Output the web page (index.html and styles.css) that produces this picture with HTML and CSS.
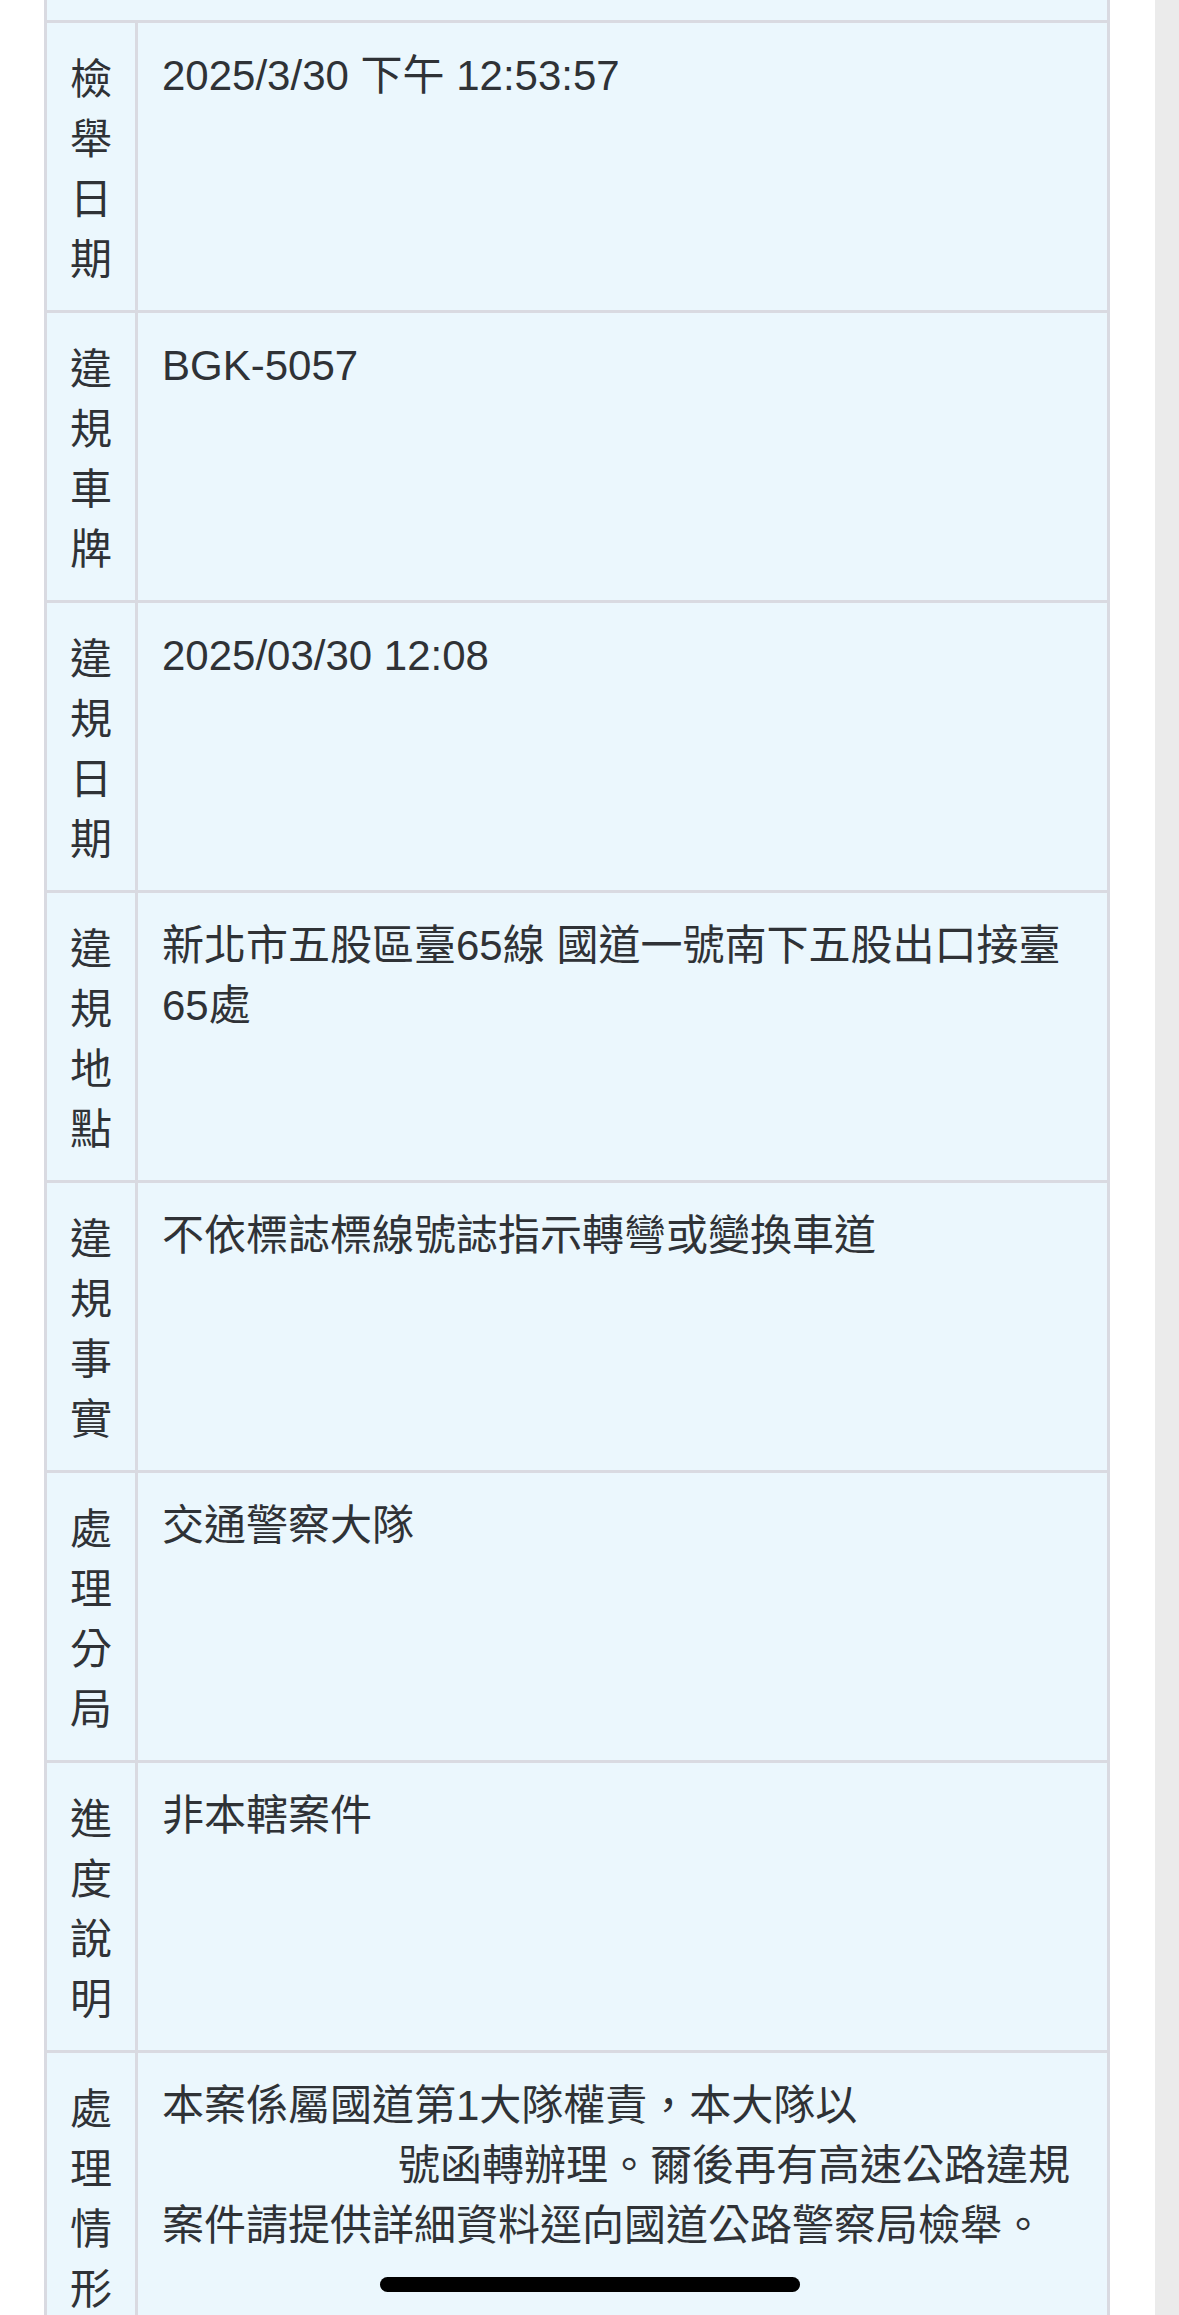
FILE: index.html
```html
<!DOCTYPE html>
<html lang="zh-Hant">
<head>
<meta charset="utf-8">
<link rel="stylesheet" href="styles.css">
</head>
<body>
<div class="page">
  <main class="main">
    <div class="table">
      <div class="stub"><div class="stub-label"></div><div class="stub-value"></div></div>
      <div class="row">
        <div class="label">檢<br>舉<br>日<br>期</div>
        <div class="value">2025/3/30 下午 12:53:57</div>
      </div>
      <div class="row">
        <div class="label">違<br>規<br>車<br>牌</div>
        <div class="value">BGK-5057</div>
      </div>
      <div class="row">
        <div class="label">違<br>規<br>日<br>期</div>
        <div class="value">2025/03/30 12:08</div>
      </div>
      <div class="row">
        <div class="label">違<br>規<br>地<br>點</div>
        <div class="value">新北市五股區臺65線 國道一號南下五股出口接臺<br>65處</div>
      </div>
      <div class="row">
        <div class="label">違<br>規<br>事<br>實</div>
        <div class="value">不依標誌標線號誌指示轉彎或變換車道</div>
      </div>
      <div class="row">
        <div class="label">處<br>理<br>分<br>局</div>
        <div class="value">交通警察大隊</div>
      </div>
      <div class="row">
        <div class="label">進<br>度<br>說<br>明</div>
        <div class="value">非本轄案件</div>
      </div>
      <div class="row">
        <div class="label">處<br>理<br>情<br>形</div>
        <div class="value">本案係屬國道第1大隊權責，本大隊以<br><span class="gap"></span>號函轉辦理。爾後再有高速公路違規<br>案件請提供詳細資料逕向國道公路警察局檢舉。</div>
      </div>
    </div>
  </main>
  <aside class="strip"></aside>
</div>
<div class="home-bar"></div>
</body>
</html>
```

FILE: styles.css
```css
html, body {
  margin: 0;
  padding: 0;
  background: #ffffff;
}

body {
  width: 1179px;
  height: 2315px;
  overflow: hidden;
  font-family: "Liberation Sans", "Noto Sans CJK TC", sans-serif;
  font-size: 42px;
  line-height: 60px;
  color: #2f3236;
}

.page {
  display: flex;
  height: 2315px;
}

.main {
  width: 1155px;
  padding-left: 44px;
  box-sizing: border-box;
}

.strip {
  width: 24px;
  background: #ebebeb;
}

.table {
  width: 1066px;
  border-left: 3px solid #d9dae1;
  border-right: 3px solid #d9dae1;
  box-sizing: border-box;
  background: #ebf7fd;
}

.stub {
  display: flex;
  height: 20px;
}

.stub-label {
  width: 88px;
}

.stub-value {
  flex: 1;
}

.row {
  display: flex;
  border-top: 3px solid #d9dae1;
}

.label {
  width: 88px;
  flex: none;
  text-align: center;
  padding: 23px 0 24px;
  border-right: 3px solid #d9dae1;
  font-family: "Noto Sans CJK TC", sans-serif;
}

.value {
  flex: 1;
  padding: 23px 24px 24px;
  white-space: nowrap;
}

.gap {
  display: inline-block;
  width: 236px;
}

.home-bar {
  position: absolute;
  left: 380px;
  top: 2277px;
  width: 420px;
  height: 15px;
  border-radius: 8px;
  background: #000000;
}
```
